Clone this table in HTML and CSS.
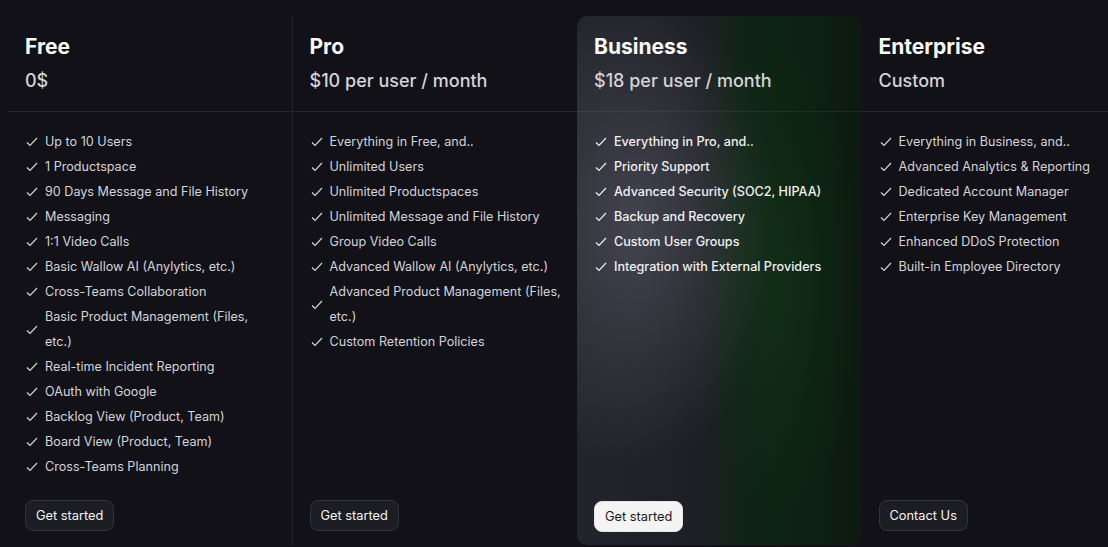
FILE: index.html
```html
<!DOCTYPE html>
<html>
<head>
    <link rel="stylesheet" href="styles.css">
</head>
<body>
    <div class="plans">
        <div class="plan">
            <div class="plan-head">
                <h2 class="plan-name">Free</h2>
                <p class="plan-price">0$</p>
            </div>
            <ul class="features">
                <li><svg class="check" viewBox="0 0 12 10"><polyline points="1,5.5 4,8.5 11,1"/></svg><span>Up to 10 Users</span></li>
                <li><svg class="check" viewBox="0 0 12 10"><polyline points="1,5.5 4,8.5 11,1"/></svg><span>1 Productspace</span></li>
                <li><svg class="check" viewBox="0 0 12 10"><polyline points="1,5.5 4,8.5 11,1"/></svg><span>90 Days Message and File History</span></li>
                <li><svg class="check" viewBox="0 0 12 10"><polyline points="1,5.5 4,8.5 11,1"/></svg><span>Messaging</span></li>
                <li><svg class="check" viewBox="0 0 12 10"><polyline points="1,5.5 4,8.5 11,1"/></svg><span>1:1 Video Calls</span></li>
                <li><svg class="check" viewBox="0 0 12 10"><polyline points="1,5.5 4,8.5 11,1"/></svg><span>Basic Wallow AI (Anylytics, etc.)</span></li>
                <li><svg class="check" viewBox="0 0 12 10"><polyline points="1,5.5 4,8.5 11,1"/></svg><span>Cross-Teams Collaboration</span></li>
                <li><svg class="check" viewBox="0 0 12 10"><polyline points="1,5.5 4,8.5 11,1"/></svg><span>Basic Product Management (Files,<br>etc.)</span></li>
                <li><svg class="check" viewBox="0 0 12 10"><polyline points="1,5.5 4,8.5 11,1"/></svg><span>Real-time Incident Reporting</span></li>
                <li><svg class="check" viewBox="0 0 12 10"><polyline points="1,5.5 4,8.5 11,1"/></svg><span>OAuth with Google</span></li>
                <li><svg class="check" viewBox="0 0 12 10"><polyline points="1,5.5 4,8.5 11,1"/></svg><span>Backlog View (Product, Team)</span></li>
                <li><svg class="check" viewBox="0 0 12 10"><polyline points="1,5.5 4,8.5 11,1"/></svg><span>Board View (Product, Team)</span></li>
                <li><svg class="check" viewBox="0 0 12 10"><polyline points="1,5.5 4,8.5 11,1"/></svg><span>Cross-Teams Planning</span></li>
            </ul>
            <div class="plan-foot"><button class="btn">Get started</button></div>
        </div>

        <div class="plan">
            <div class="plan-head">
                <h2 class="plan-name">Pro</h2>
                <p class="plan-price">$10 per user / month</p>
            </div>
            <ul class="features">
                <li><svg class="check" viewBox="0 0 12 10"><polyline points="1,5.5 4,8.5 11,1"/></svg><span>Everything in Free, and..</span></li>
                <li><svg class="check" viewBox="0 0 12 10"><polyline points="1,5.5 4,8.5 11,1"/></svg><span>Unlimited Users</span></li>
                <li><svg class="check" viewBox="0 0 12 10"><polyline points="1,5.5 4,8.5 11,1"/></svg><span>Unlimited Productspaces</span></li>
                <li><svg class="check" viewBox="0 0 12 10"><polyline points="1,5.5 4,8.5 11,1"/></svg><span>Unlimited Message and File History</span></li>
                <li><svg class="check" viewBox="0 0 12 10"><polyline points="1,5.5 4,8.5 11,1"/></svg><span>Group Video Calls</span></li>
                <li><svg class="check" viewBox="0 0 12 10"><polyline points="1,5.5 4,8.5 11,1"/></svg><span>Advanced Wallow AI (Anylytics, etc.)</span></li>
                <li><svg class="check" viewBox="0 0 12 10"><polyline points="1,5.5 4,8.5 11,1"/></svg><span>Advanced Product Management (Files,<br>etc.)</span></li>
                <li><svg class="check" viewBox="0 0 12 10"><polyline points="1,5.5 4,8.5 11,1"/></svg><span>Custom Retention Policies</span></li>
            </ul>
            <div class="plan-foot"><button class="btn">Get started</button></div>
        </div>

        <div class="plan plan-featured">
            <div class="plan-head">
                <h2 class="plan-name">Business</h2>
                <p class="plan-price">$18 per user / month</p>
            </div>
            <ul class="features">
                <li><svg class="check" viewBox="0 0 12 10"><polyline points="1,5.5 4,8.5 11,1"/></svg><span>Everything in Pro, and..</span></li>
                <li><svg class="check" viewBox="0 0 12 10"><polyline points="1,5.5 4,8.5 11,1"/></svg><span>Priority Support</span></li>
                <li><svg class="check" viewBox="0 0 12 10"><polyline points="1,5.5 4,8.5 11,1"/></svg><span>Advanced Security (SOC2, HIPAA)</span></li>
                <li><svg class="check" viewBox="0 0 12 10"><polyline points="1,5.5 4,8.5 11,1"/></svg><span>Backup and Recovery</span></li>
                <li><svg class="check" viewBox="0 0 12 10"><polyline points="1,5.5 4,8.5 11,1"/></svg><span>Custom User Groups</span></li>
                <li><svg class="check" viewBox="0 0 12 10"><polyline points="1,5.5 4,8.5 11,1"/></svg><span>Integration with External Providers</span></li>
            </ul>
            <div class="plan-foot"><button class="btn btn-light">Get started</button></div>
        </div>

        <div class="plan">
            <div class="plan-head">
                <h2 class="plan-name">Enterprise</h2>
                <p class="plan-price">Custom</p>
            </div>
            <ul class="features">
                <li><svg class="check" viewBox="0 0 12 10"><polyline points="1,5.5 4,8.5 11,1"/></svg><span>Everything in Business, and..</span></li>
                <li><svg class="check" viewBox="0 0 12 10"><polyline points="1,5.5 4,8.5 11,1"/></svg><span>Advanced Analytics &amp; Reporting</span></li>
                <li><svg class="check" viewBox="0 0 12 10"><polyline points="1,5.5 4,8.5 11,1"/></svg><span>Dedicated Account Manager</span></li>
                <li><svg class="check" viewBox="0 0 12 10"><polyline points="1,5.5 4,8.5 11,1"/></svg><span>Enterprise Key Management</span></li>
                <li><svg class="check" viewBox="0 0 12 10"><polyline points="1,5.5 4,8.5 11,1"/></svg><span>Enhanced DDoS Protection</span></li>
                <li><svg class="check" viewBox="0 0 12 10"><polyline points="1,5.5 4,8.5 11,1"/></svg><span>Built-in Employee Directory</span></li>
            </ul>
            <div class="plan-foot"><button class="btn">Contact Us</button></div>
        </div>
    </div>
</body>
</html>
```

FILE: styles.css
```css
html, body {
    margin: 0;
    height: 100%;
    overflow: hidden;
}
body {
    background-color: #111117;
    color: #d6d6db;
    font-family: 'Inter', 'Noto Sans', sans-serif;
}
.plans {
    display: grid;
    grid-template-columns: repeat(4, 284.5px);
    padding: 16px 0 0 8px;
}
.plan {
    display: flex;
    flex-direction: column;
    height: 529px;
    box-sizing: border-box;
}
.plan:first-child {
    border-right: 1px solid #26262d;
}
.plan-head {
    padding: 17px 17px 17px;
    border-bottom: 1px solid #26262d;
}
.plan-name {
    margin: 0;
    font-size: 21px;
    line-height: 28px;
    font-weight: 700;
    color: #fafafa;
}
.plan-price {
    margin: 7px 0 0;
    font-size: 18px;
    line-height: 26px;
    font-weight: 500;
    color: #d4d4d9;
}
.features {
    list-style: none;
    margin: 0;
    padding: 17px 10px 0 18px;
}
.features li {
    display: flex;
    align-items: center;
    font-size: 12.6px;
    line-height: 25px;
    color: #d4d4d9;
}
.check {
    flex: 0 0 12px;
    width: 12px;
    height: 10px;
    margin-right: 7px;
    margin-top: 1px;
    fill: none;
    stroke: #d4d4d9;
    stroke-width: 1.2;
}
.plan-foot {
    margin-top: auto;
    padding: 0 17px 14px;
}
.btn {
    font-family: inherit;
    font-size: 12.8px;
    height: 31px;
    padding: 0 10px;
    border-radius: 8px;
    border: 1px solid #33333b;
    background-color: #1c1c23;
    color: #f4f4f5;
    cursor: pointer;
}
.plan-featured {
    border-radius: 10px;
    background:
        radial-gradient(ellipse 50% 45% at 20% 40%, rgba(90, 90, 104, 0.6), rgba(90, 90, 104, 0) 100%),
        radial-gradient(ellipse 30% 45% at 70% 50%, rgba(22, 64, 28, 0.35), rgba(22, 64, 28, 0) 100%),
        linear-gradient(90deg, #24242c 0%, #1e1f25 42%, #132318 55%, #0e2413 68%, #0d1f10 88%, #0f1811 100%);
}
.plan-featured .plan-head {
    border-bottom-color: rgba(255, 255, 255, 0.06);
}
.plan-featured .features li {
    color: #f0f0f2;
    font-weight: 500;
}
.plan-featured .check {
    stroke: #f0f0f2;
}
.plan-featured .plan-foot {
    padding-bottom: 13px;
}
.btn-light {
    background-color: #f4f4f5;
    border-color: #e4e4e7;
    color: #18181b;
}
```
